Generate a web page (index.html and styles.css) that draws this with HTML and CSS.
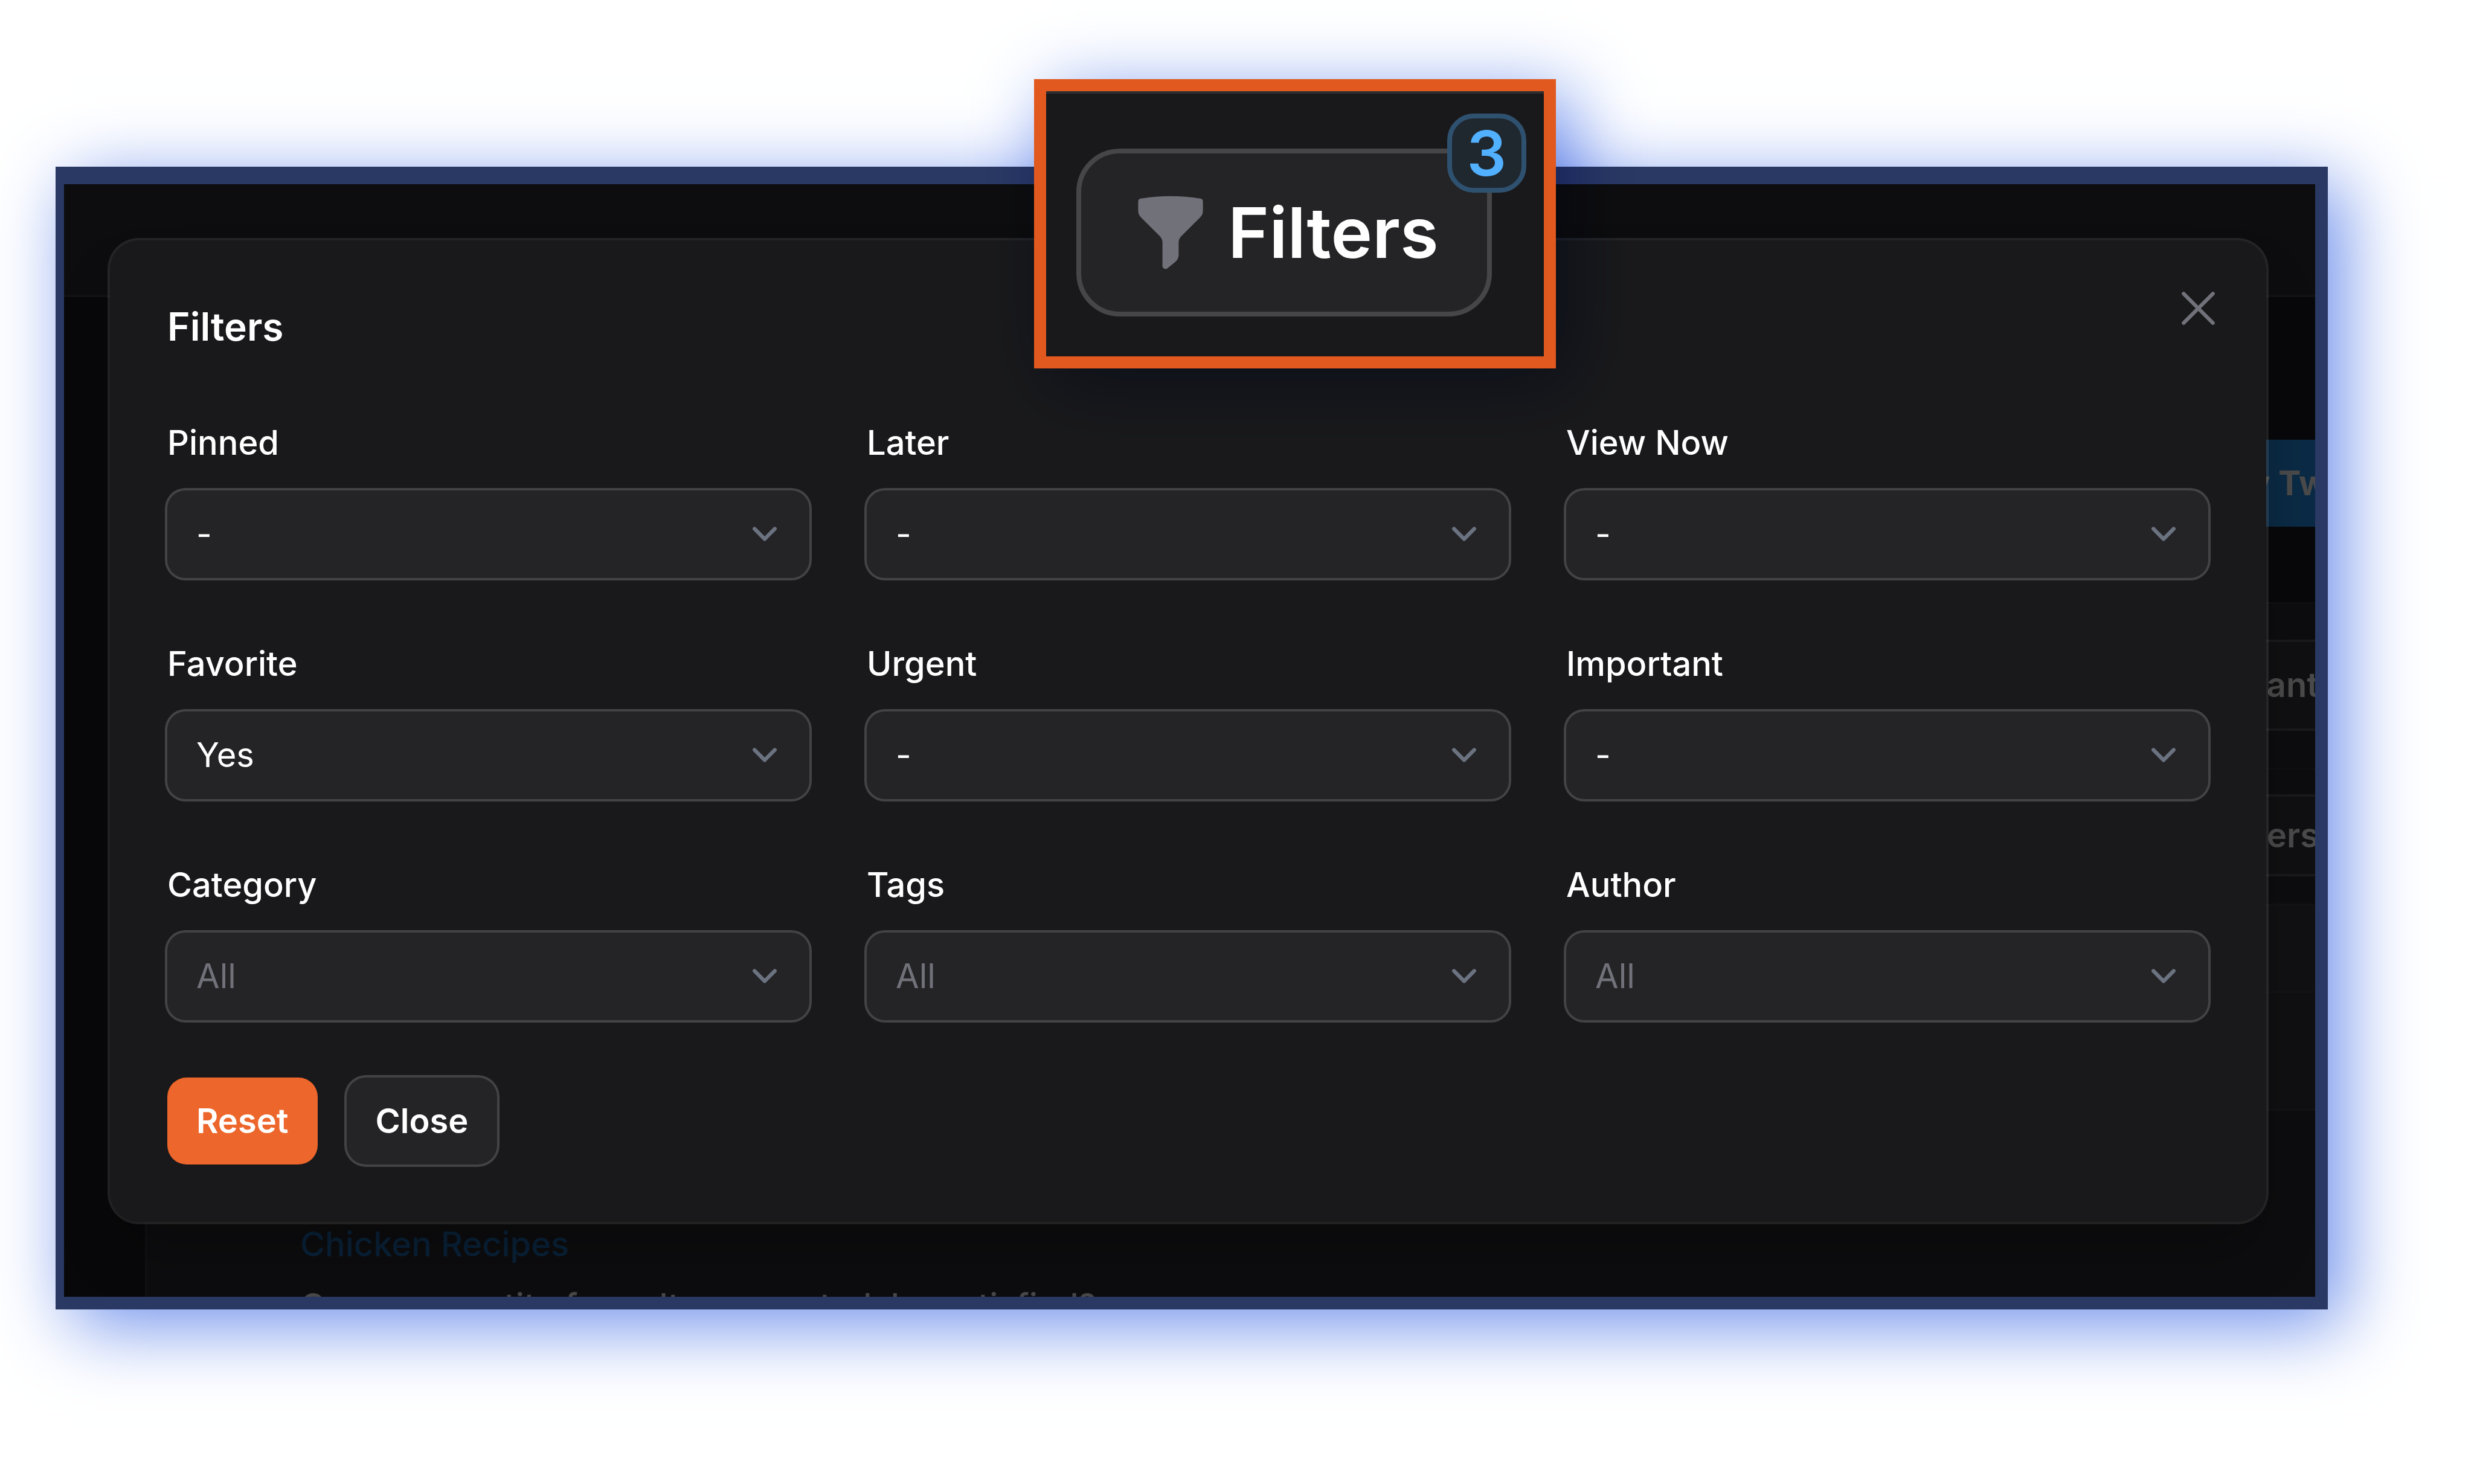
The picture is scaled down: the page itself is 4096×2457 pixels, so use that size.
FILE: index.html
```html
<!DOCTYPE html>
<html lang="en">
<head>
<meta charset="utf-8">
<title>Filters</title>
<link rel="stylesheet" href="styles.css">
</head>
<body>
<svg class="sprite" aria-hidden="true">
  <symbol id="chevron" viewBox="0 0 20 20"><path d="M6 8l4 4 4-4" fill="none" stroke="currentColor" stroke-width="1.5" stroke-linecap="round" stroke-linejoin="round"/></symbol>
</svg>
<main class="frame">
  <div class="app">
    <header class="app-header"></header>
    <div class="app-actions"><button class="tweet" type="button">My Tweets</button></div>
    <section class="card">
      <div class="toolbar toolbar-tabs"><button class="tool" type="button">Important</button></div>
      <div class="toolbar toolbar-filters"><button class="tool tool-small" type="button">Filters</button></div>
      <div class="table-head"></div>
      <div class="table-filters"></div>
      <article class="entry">
        <a class="entry-link" href="#">Chicken Recipes</a>
        <p class="entry-text">Can no quantity for cults generated, be satisfied?</p>
      </article>
    </section>
  </div>

  <div class="overlay">
    <form class="modal" role="dialog" aria-labelledby="modal-title">
      <h1 class="modal-title" id="modal-title">Filters</h1>
      <button class="dismiss" type="button" aria-label="Dismiss">
        <svg viewBox="0 0 24 24"><path d="M6 18 18 6M6 6l12 12" fill="none" stroke="currentColor" stroke-width="1.5" stroke-linecap="round"/></svg>
      </button>
      <div class="fields">
        <div class="field"><label for="pinned">Pinned</label><div class="control"><select id="pinned"><option>-</option></select><svg class="chevron"><use href="#chevron"/></svg></div></div>
        <div class="field"><label for="later">Later</label><div class="control"><select id="later"><option>-</option></select><svg class="chevron"><use href="#chevron"/></svg></div></div>
        <div class="field"><label for="view-now">View Now</label><div class="control"><select id="view-now"><option>-</option></select><svg class="chevron"><use href="#chevron"/></svg></div></div>
        <div class="field"><label for="favorite">Favorite</label><div class="control"><select id="favorite"><option>Yes</option></select><svg class="chevron"><use href="#chevron"/></svg></div></div>
        <div class="field"><label for="urgent">Urgent</label><div class="control"><select id="urgent"><option>-</option></select><svg class="chevron"><use href="#chevron"/></svg></div></div>
        <div class="field"><label for="important">Important</label><div class="control"><select id="important"><option>-</option></select><svg class="chevron"><use href="#chevron"/></svg></div></div>
        <div class="field"><label for="category">Category</label><div class="control"><select class="placeholder" id="category"><option>All</option></select><svg class="chevron"><use href="#chevron"/></svg></div></div>
        <div class="field"><label for="tags">Tags</label><div class="control"><select class="placeholder" id="tags"><option>All</option></select><svg class="chevron"><use href="#chevron"/></svg></div></div>
        <div class="field"><label for="author">Author</label><div class="control"><select class="placeholder" id="author"><option>All</option></select><svg class="chevron"><use href="#chevron"/></svg></div></div>
      </div>
      <div class="modal-actions">
        <button class="btn btn-primary" type="reset">Reset</button>
        <button class="btn btn-gray" type="button">Close</button>
      </div>
    </form>
  </div>

  <aside class="callout">
    <button class="filter-button" type="button">
      <svg class="funnel" viewBox="0 0 20 20" aria-hidden="true"><path fill="currentColor" d="M2.628 1.601C5.028 1.206 7.49 1 10 1s4.973.206 7.372.601a.75.75 0 0 1 .628.74v2.288a2.25 2.25 0 0 1-.659 1.59l-4.682 4.683a2.25 2.25 0 0 0-.659 1.59v3.037c0 .684-.31 1.33-.844 1.757l-1.937 1.55A.75.75 0 0 1 8 18.25v-5.757a2.25 2.25 0 0 0-.659-1.591L2.659 6.22A2.25 2.25 0 0 1 2 4.629V2.34a.75.75 0 0 1 .628-.74Z"/></svg>
      <span>Filters</span>
    </button>
    <span class="badge">3</span>
  </aside>
</main>
</body>
</html>
```
FILE: styles.css
```css
* { box-sizing: border-box; }

body {
  margin: 0;
  padding: 276px 242px 280px 92px;
  background: #fff;
  color: #fff;
  font: 500 56px/97px Inter, "Liberation Sans", sans-serif;
}

button, select { font: inherit; color: inherit; border: 0; margin: 0; }
h1, p { margin: 0; }
.sprite { position: absolute; width: 0; height: 0; }

/* Blue framed window with a tinted glow */
.frame {
  position: relative;
  border: solid #2a3963;
  border-width: 29px 21px 21px 14px;
}
.frame::before, .callout::before {
  content: "";
  position: absolute;
  box-shadow: 26px 26px 116px rgb(109, 143, 235);
  mix-blend-mode: multiply;
  pointer-events: none;
}
.frame::before { inset: -29px -21px -21px -14px; }

/* Dimmed page behind the dialog */
.app {
  position: absolute;
  inset: 0;
  overflow: hidden;
  background: #08080a;
  white-space: nowrap;
}
.app-header { height: 187px; background: #0d0d0f; border-bottom: 4px solid #121212; }
.app-actions { display: flex; justify-content: flex-end; padding-top: 236px; }
.tweet {
  height: 144px;
  margin-right: -186px;
  padding: 0 48px;
  background: #0b2a45;
  color: #4a4a4a;
  font-weight: 700;
}
.card { margin: 125px 0 0 134px; border-left: 3px solid #111112; background: #0d0d0f; }
.toolbar { display: flex; justify-content: flex-end; border-top: 3px solid #101012; }
.toolbar-tabs { padding: 63px 0 65px; }
.toolbar-filters { padding: 45px 0 49px; }
.tool {
  height: 143px;
  margin-right: -54px;
  padding: 0 48px;
  background: #101012;
  box-shadow: 0 0 0 4px #1a1a1c;
  color: #4a4a4a;
  font-weight: 600;
}
.tool-small { height: 128px; }
.table-head { height: 145px; border-top: 3px solid #131315; background: #111113; }
.table-filters { height: 198px; border: solid #131315; border-width: 3px 0; background: #101012; }
.entry { padding: 173px 0 0 254px; }
.entry-link { display: block; color: #0a2239; text-decoration: none; }
.entry-text { margin-top: 5px; color: #484848; }

/* Dialog */
.overlay { position: relative; overflow: hidden; padding: 93px 81px 124px 76px; }
.modal {
  position: relative;
  padding: 94px 96px 95px 95px;
  border-radius: 48px;
  background: #19191b;
  box-shadow: 0 0 0 4px rgba(255, 255, 255, .1), 0 60px 100px -20px rgba(0, 0, 0, .3);
}
.modal-title { font-size: 64px; font-weight: 600; line-height: 97px; }
.dismiss {
  position: absolute;
  top: 64px;
  right: 64px;
  width: 97px;
  height: 97px;
  padding: 0;
  background: none;
  color: #71717a;
}
.dismiss svg { display: block; width: 97px; height: 97px; }
.fields {
  display: grid;
  grid-template-columns: repeat(3, 1fr);
  gap: 94px 95px;
  margin: 96px 0 95px;
}
.field { display: grid; gap: 30px; }
.control { position: relative; display: grid; }
select {
  appearance: none;
  height: 145px;
  padding: 0 48px;
  border-radius: 30px;
  background: #242426;
  box-shadow: 0 0 0 4px #434345;
  font-weight: 400;
}
.placeholder { color: #71717a; }
.chevron {
  position: absolute;
  top: 30px;
  right: 32px;
  width: 84px;
  height: 84px;
  color: #6b7280;
  pointer-events: none;
}
.modal-actions { display: flex; gap: 48px; }
.btn { height: 144px; padding: 0 48px; border-radius: 32px; font-weight: 600; }
.btn-primary { background: #ed662b; }
.btn-gray { background: #242426; box-shadow: 0 0 0 4px #434345; }

/* Enlarged button shown over the window */
.callout {
  position: absolute;
  top: -174px;
  left: 43.09%;
  padding: 95px 86px 66px 50px;
  border: 20px solid #e1591f;
  background: #19191b;
  box-shadow: inset 0 4px #2e2e31;
}
.callout::before { inset: -20px; }
.filter-button {
  display: flex;
  align-items: center;
  gap: 28px;
  height: 278px;
  padding: 0 80px 0 81px;
  border: 8px solid #464648;
  border-radius: 72px;
  background: #242426;
  font-size: 116px;
  font-weight: 600;
}
.funnel { width: 134px; height: 134px; color: #71717a; }
.badge {
  position: absolute;
  top: 37px;
  right: 29px;
  display: grid;
  place-items: center;
  width: 131px;
  height: 131px;
  border: 8px solid #2f5170;
  border-radius: 44px;
  background: #1f272f;
  color: #51b0ff;
  font-size: 103px;
  font-weight: 600;
}
```
